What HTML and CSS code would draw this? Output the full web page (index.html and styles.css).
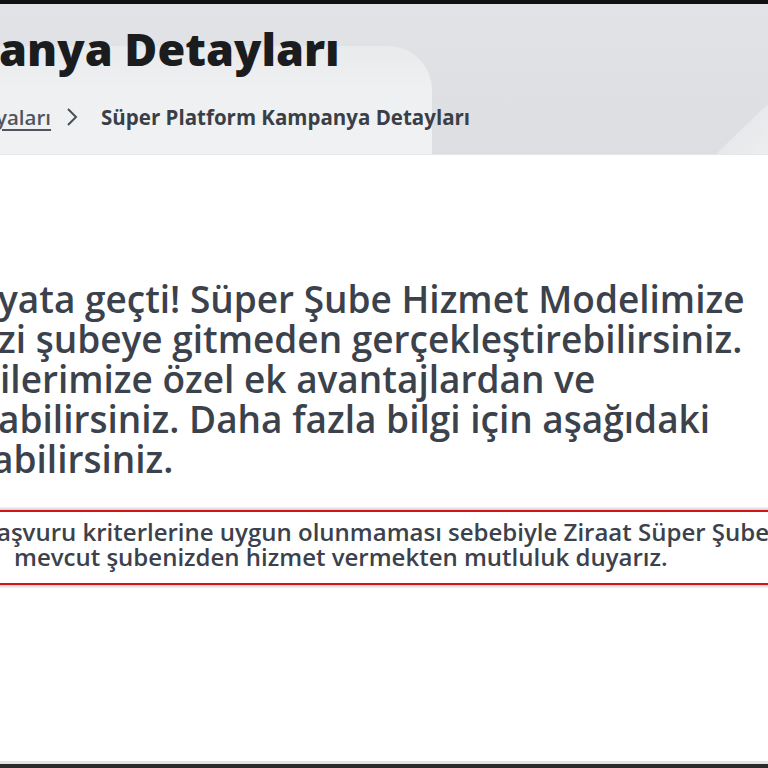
FILE: index.html
```html
<!DOCTYPE html>
<html lang="tr">
<head>
<meta charset="utf-8">
<title>Süper Platform Kampanya Detayları</title>
<link rel="stylesheet" href="styles.css">
</head>
<body>
<div class="page">
  <div class="topbar"></div>
  <header class="hero">
    <div class="panel"></div>
    <div class="corner"></div>
    <div class="hero-content">
      <h1 class="title">anya Detayları</h1>
      <nav class="crumbs">
        <a class="crumb-link" href="#">yaları</a>
        <svg class="chev" width="14" height="20" viewBox="0 0 14 20"><path d="M3 2 L11 10 L3 18" fill="none" stroke="#4a4f57" stroke-width="2"/></svg>
        <span class="crumb-current">Süper Platform Kampanya Detayları</span>
      </nav>
    </div>
  </header>
  <main class="main">
    <p class="lead">
      <span class="l l1">yata geçti! Süper Şube Hizmet Modelimize</span>
      <span class="l l2">zi şubeye gitmeden gerçekleştirebilirsiniz.</span>
      <span class="l l3">ilerimize özel ek avantajlardan ve</span>
      <span class="l l4">abilirsiniz. Daha fazla bilgi için aşağıdaki</span>
      <span class="l l5">abilirsiniz.</span>
    </p>
    <div class="notice">
      <span class="n n1">aşvuru kriterlerine uygun olunmaması sebebiyle Ziraat Süper Şube</span>
      <span class="n n2">mevcut şubenizden hizmet vermekten mutluluk duyarız.</span>
    </div>
  </main>
  <div class="bottom"></div>
</div>
</body>
</html>
```
FILE: styles.css
```css
* { box-sizing: border-box; }
html, body { margin: 0; padding: 0; }
body {
  width: 768px;
  height: 768px;
  overflow: hidden;
  background: #fff;
  font-family: "Open Sans", "Noto Sans", sans-serif;
}
.page {
  display: flex;
  flex-direction: column;
  height: 768px;
}
.topbar {
  height: 4px;
  background: #111;
  flex: none;
}
.hero {
  flex: none;
  height: 151px;
  display: grid;
  background: linear-gradient(to bottom, #e2e3e6 0%, #dcdee1 100%);
  overflow: hidden;
  border-bottom: 1px solid #e6e7e9;
}
.panel, .corner, .hero-content { grid-area: 1 / 1; }
.panel {
  width: 432px;
  margin-top: 42px;
  background: linear-gradient(to bottom, #e9eaec 0%, #eff0f2 40%, #f0f1f3 100%);
  border-top-right-radius: 44px;
}
.corner {
  justify-self: end;
  align-self: end;
  width: 52px;
  height: 50px;
  background: linear-gradient(135deg, #e2e3e6 0%, #eceef0 100%);
  clip-path: polygon(100% 0, 100% 100%, 0 100%);
}
.hero-content {
  padding-top: 17px;
  display: flex;
  flex-direction: column;
}
.title {
  margin: 0 0 0 -1px;
  font-size: 45px;
  line-height: 56px;
  font-weight: 800;
  color: #1b1c1e;
  white-space: nowrap;
}
.crumbs {
  margin-top: 28px;
  display: flex;
  align-items: center;
  height: 24px;
  font-size: 20.5px;
  font-weight: 700;
  white-space: nowrap;
}
.crumb-link {
  color: #50555d;
  font-weight: 600;
  text-decoration: underline;
  text-decoration-thickness: 2px;
  text-underline-offset: 4px;
  margin-left: -4px;
}
.chev { margin-left: 14px; margin-right: 22px; }
.crumb-current { color: #3a3f47; }
.main {
  flex: 1;
  display: flex;
  flex-direction: column;
}
.lead {
  margin: 124px 0 0 0;
  font-size: 37px;
  line-height: 40px;
  font-weight: 600;
  color: #3b424c;
  display: flex;
  flex-direction: column;
  white-space: nowrap;
}
.l1 { margin-left: -2px; }
.l2 { margin-left: -2px; }
.l3 { margin-left: 0; }
.l4 { margin-left: -2px; }
.l5 { margin-left: -8px; }
.notice {
  margin: 31px -10px 0 -10px;
  border-top: 2px solid #d2121c;
  border-bottom: 2px solid #d2121c;
  box-shadow: 0 -2px 2px #d6d6d6, 0 2px 2px #d6d6d6;
  padding: 7px 10px 14px 10px;
  font-size: 24px;
  line-height: 25px;
  font-weight: 600;
  color: #3b424c;
  display: flex;
  flex-direction: column;
  white-space: nowrap;
  overflow: hidden;
}
.n1 { margin-left: -3px; }
.n2 { margin-left: 14px; }
.bottom {
  flex: none;
  height: 7px;
  border-top: 3px solid #e4e4e4;
  background: #2b2b2b;
}
```
